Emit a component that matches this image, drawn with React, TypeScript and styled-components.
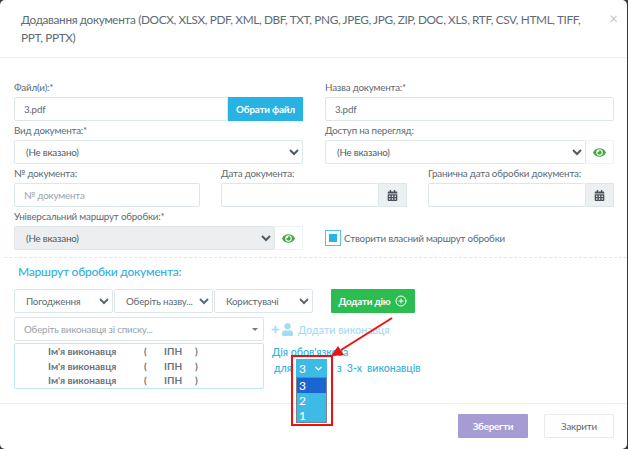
import React from 'react';
import styled, {createGlobalStyle, css} from 'styled-components';
import {FaCalendarAlt, FaEye, FaPlus, FaUser} from 'react-icons/fa';
import {FiPlusCircle} from 'react-icons/fi';
import {ChevronDown} from 'lucide-react';

const GlobalStyle = createGlobalStyle`
  html, body {
    margin: 0;
    background: #fff;
  }
  * {
    box-sizing: border-box;
    font-family: Lato, Roboto, sans-serif;
  }
`

const formText = css`
  font-size: 9.8px;
  letter-spacing: -0.2px;
`

const performers = ["Ім'я виконавця", "Ім'я виконавця", "Ім'я виконавця"];

const NotSet = () => <option>(Не вказано)</option>;

const EyeAddon = () => (
    <Addon>
        <FaEye size={13} color={'#43a943'}/>
    </Addon>
);

const CalendarAddon = () => (
    <Addon $shaded>
        <FaCalendarAlt size={11} color={'#4a5259'}/>
    </Addon>
);

export default function App() {
    return (
        <Page>
            <GlobalStyle/>
            <Modal>
                <Header>
                    <Title>Додавання документа (DOCX, XLSX, PDF, XML, DBF, TXT, PNG, JPEG, JPG, ZIP, DOC, XLS, RTF, CSV, HTML, TIFF, PPT, PPTX)</Title>
                    <Close>×</Close>
                </Header>
                <Form>
                    <TwoCols>
                        <Field>
                            <Label>Файл(и):*</Label>
                            <Group>
                                <Input defaultValue="3.pdf"/>
                                <FileButton>Обрати файл</FileButton>
                            </Group>
                        </Field>
                        <Field>
                            <Label>Назва документа:*</Label>
                            <Input defaultValue="3.pdf"/>
                        </Field>
                        <Field>
                            <Label>Вид документа:*</Label>
                            <Select><NotSet/></Select>
                        </Field>
                        <Field>
                            <Label>Доступ на перегляд:</Label>
                            <Group>
                                <Select><NotSet/></Select>
                                <EyeAddon/>
                            </Group>
                        </Field>
                    </TwoCols>
                    <ThreeCols>
                        <Field>
                            <Label>№ документа:</Label>
                            <Input placeholder="№ документа"/>
                        </Field>
                        <Field>
                            <Label>Дата документа:</Label>
                            <Group>
                                <Input/>
                                <CalendarAddon/>
                            </Group>
                        </Field>
                        <Field>
                            <Label>Гранична дата обробки документа:</Label>
                            <Group>
                                <Input/>
                                <CalendarAddon/>
                            </Group>
                        </Field>
                    </ThreeCols>
                    <TwoCols>
                        <Field>
                            <Label>Універсальний маршрут обробки:*</Label>
                            <Group>
                                <Select $disabled><NotSet/></Select>
                                <EyeAddon/>
                            </Group>
                        </Field>
                        <CheckRow>
                            <CheckBox/>
                            <CheckText>Створити власний маршрут обробки</CheckText>
                        </CheckRow>
                    </TwoCols>
                </Form>
                <Route>
                    <RouteTitle>Маршрут обробки документа:</RouteTitle>
                    <ActionRow>
                        <ActionSelect><option>Погодження</option></ActionSelect>
                        <ActionSelect><option>Оберіть назву...</option></ActionSelect>
                        <ActionSelect><option>Користувачі</option></ActionSelect>
                        <AddAction>Додати дію <FiPlusCircle size={12}/></AddAction>
                    </ActionRow>
                    <PerformerRow>
                        <PerformerPicker>
                            Оберіть виконавця зі списку...
                            <Caret/>
                        </PerformerPicker>
                        <AddPerformer>
                            <FaPlus size={9}/>
                            <FaUser size={13}/>
                            <span>Додати виконавця</span>
                        </AddPerformer>
                    </PerformerRow>
                    <ListRow>
                        <PerformerList>
                            {performers.map((name, i) => (
                                <PerformerItem key={i}>
                                    <span>{name}</span>
                                    <span>(</span>
                                    <span>ІПН</span>
                                    <span>)</span>
                                </PerformerItem>
                            ))}
                        </PerformerList>
                        <Rule>
                            <RuleLine>Дія обов'язкова</RuleLine>
                            <RuleLine $indent>
                                <RuleWord>для</RuleWord>
                                <Count>
                                    3 <ChevronDown size={11} strokeWidth={3}/>
                                    <CountList>
                                        <CountOption $active>3</CountOption>
                                        <CountOption>2</CountOption>
                                        <CountOption>1</CountOption>
                                    </CountList>
                                    <Highlight/>
                                </Count>
                                <span>з</span>
                                <span>3-х</span>
                                <span>виконавців</span>
                            </RuleLine>
                        </Rule>
                        <Arrow viewBox="0 0 64 46" width="64" height="46">
                            <line x1="61" y1="3" x2="10" y2="35" stroke="#f01010" strokeWidth="2"/>
                            <polygon points="0,41 7,31 13,40" fill="#f01010"/>
                        </Arrow>
                    </ListRow>
                </Route>
                <Footer>
                    <SaveButton>Зберегти</SaveButton>
                    <CloseButton>Закрити</CloseButton>
                </Footer>
            </Modal>
        </Page>
    );
}

const Page = styled.div`
  width: 628px;
  height: 449px;
  background: #3a3a3a;
  overflow: hidden;
`
const Modal = styled.div`
  width: 627px;
  height: 449px;
  background: #fff;
  border-radius: 5px;
  color: #5d6a73;
  overflow: hidden;
`
const Header = styled.div`
  display: flex;
  justify-content: space-between;
  height: 58px;
  padding: 11px 9px 0 21px;
  border-bottom: 1px solid #e9eef0;
`
const Title = styled.div`
  width: 578px;
  font-size: 11.8px;
  letter-spacing: -0.36px;
  line-height: 18px;
  color: #5f6b74;
`
const Close = styled.div`
  font-size: 15px;
  line-height: 14px;
  color: #c5c9cc;
`
const Form = styled.div`
  padding: 20px 13px 0 14px;
`
const TwoCols = styled.div`
  display: grid;
  grid-template-columns: 289px 289px;
  column-gap: 22px;
`
const ThreeCols = styled.div`
  display: grid;
  grid-template-columns: 186px 186px 186px;
  column-gap: 21px;
`
const Field = styled.div`
  display: grid;
  grid-template-rows: 19px 24px;
`
const Label = styled.label`
  ${formText}
  line-height: 18px;
  color: #5d6a73;
`
const Group = styled.div`
  display: flex;
  min-width: 0;
`
const Input = styled.input`
  ${formText}
  flex: 1;
  min-width: 0;
  width: 100%;
  height: 24px;
  padding: 0 9px;
  border: 1px solid #dde6e9;
  border-radius: 2px;
  outline: none;
  background: #fff;
  color: #5d6a73;
  &::placeholder {
    color: #9aa3a9;
  }
`
const Select = styled.select<{$disabled?: boolean}>`
  ${formText}
  flex: 1;
  min-width: 0;
  width: 100%;
  height: 24px;
  padding: 0 7px;
  border: 1px solid #dde6e9;
  border-radius: 2px;
  outline: none;
  background: ${p => (p.$disabled ? '#eceeef' : '#fff')};
  color: #4f5b63;
`
const FileButton = styled.button`
  ${formText}
  flex: none;
  width: 75px;
  height: 24px;
  padding: 0;
  border: none;
  background: #27b4e4;
  color: #fff;
  font-weight: 700;
`
const Addon = styled.div<{$shaded?: boolean}>`
  flex: none;
  display: flex;
  align-items: center;
  justify-content: center;
  width: 28px;
  height: 24px;
  border: 1px solid ${p => (p.$shaded ? '#dde6e9' : '#f0f3f4')};
  border-left: none;
  background: ${p => (p.$shaded ? '#edf0f1' : '#fff')};
`
const CheckRow = styled.div`
  display: flex;
  align-items: center;
  gap: 3px;
  padding-top: 19px;
`
const CheckBox = styled.span`
  width: 16px;
  height: 16px;
  border: 1px solid #4fc3ea;
  padding: 3px;
  background: #27b4e4 content-box;
`
const CheckText = styled.span`
  ${formText}
  color: #5d6a73;
`
const Route = styled.div`
  margin: 7px 0 0 4px;
  padding: 0 13px 0 10px;
  border-top: 1px dashed #e2e6e8;
`
const RouteTitle = styled.div`
  height: 31px;
  padding: 5px 0 0 4px;
  font-size: 12px;
  letter-spacing: -0.25px;
  line-height: 18px;
  font-weight: 500;
  color: #2fb1de;
`
const ActionRow = styled.div`
  display: flex;
  gap: 1px;
  height: 24px;
`
const ActionSelect = styled(Select)`
  flex: none;
  width: 99px;
  padding: 0 0 0 7px;
  color: #5d6a73;
`
const AddAction = styled.button`
  ${formText}
  display: flex;
  align-items: center;
  justify-content: center;
  gap: 5px;
  width: 84px;
  height: 24px;
  margin-left: 17px;
  padding: 0;
  border: none;
  border-radius: 1px;
  background: #2bbd50;
  color: #fff;
  font-weight: 700;
`
const PerformerRow = styled.div`
  display: flex;
  align-items: center;
  gap: 7px;
  margin-top: 4px;
`
const PerformerPicker = styled.div`
  ${formText}
  position: relative;
  width: 250px;
  height: 24px;
  padding-left: 9px;
  border: 1px solid #dde6e9;
  border-radius: 2px;
  line-height: 22px;
  color: #9aa3a9;
`
const Caret = styled.i`
  position: absolute;
  right: 5px;
  top: 10px;
  border: 3px solid transparent;
  border-top: 3px solid #777;
`
const AddPerformer = styled.div`
  display: flex;
  align-items: center;
  gap: 1px;
  color: #a3dcf0;
  font-size: 10.7px;
  font-weight: 500;
  span {
    margin-left: 3px;
  }
`
const ListRow = styled.div`
  position: relative;
  display: flex;
  gap: 8px;
  margin-top: 2px;
`
const PerformerList = styled.div`
  width: 250px;
  height: 46px;
  border: 1px solid #bfe8f5;
  border-radius: 2px;
`
const PerformerItem = styled.div`
  display: grid;
  grid-template-columns: 96px 20px 31px auto;
  height: 14.5px;
  padding-left: 33px;
  font-size: 10px;
  line-height: 14px;
  font-weight: 700;
  color: #6a747c;
`
const Rule = styled.div`
  color: #2fb1de;
  font-size: 10.6px;
  font-weight: 500;
`
const RuleLine = styled.div<{$indent?: boolean}>`
  display: flex;
  align-items: center;
  gap: 5px;
  height: 16px;
  margin-top: ${p => (p.$indent ? '0' : '1px')};
  padding-left: ${p => (p.$indent ? '2px' : '0')};
  white-space: nowrap;
`
const RuleWord = styled.span`
  width: 17px;
`
const Count = styled.div`
  position: relative;
  display: flex;
  align-items: center;
  justify-content: space-between;
  width: 31px;
  height: 18px;
  margin-right: 5px;
  padding: 0 3px;
  background: #3dbbe6;
  color: #fff;
  font-size: 12px;
`
const CountList = styled.div`
  position: absolute;
  left: 0;
  top: 18px;
  width: 31px;
  height: 46px;
  border: 1px solid #77848c;
  background: #3dbbe6;
`
const CountOption = styled.div<{$active?: boolean}>`
  height: 15px;
  padding-left: 2px;
  background: ${p => (p.$active ? '#1a66d0' : 'transparent')};
  color: #fff;
  font-size: 12px;
  line-height: 15px;
`
const Highlight = styled.div`
  position: absolute;
  left: -5px;
  top: -4px;
  width: 42px;
  height: 71px;
  border: 2.5px solid #f01010;
`
const Arrow = styled.svg`
  position: absolute;
  left: 317px;
  top: -28px;
`
const Footer = styled.div`
  display: flex;
  justify-content: flex-end;
  gap: 16px;
  height: 46px;
  margin-top: 14px;
  padding: 10px 13px 0 0;
  border-top: 1px solid #edf0f1;
`
const SaveButton = styled.button`
  ${formText}
  width: 70px;
  height: 24px;
  padding: 0;
  border: none;
  border-radius: 1px;
  background: #a79bd4;
  color: #fff;
  font-weight: 700;
`
const CloseButton = styled.button`
  ${formText}
  width: 70px;
  height: 24px;
  padding: 0;
  border: 1px solid #e6ebed;
  border-radius: 1px;
  background: #fff;
  color: #5d6a73;
`
